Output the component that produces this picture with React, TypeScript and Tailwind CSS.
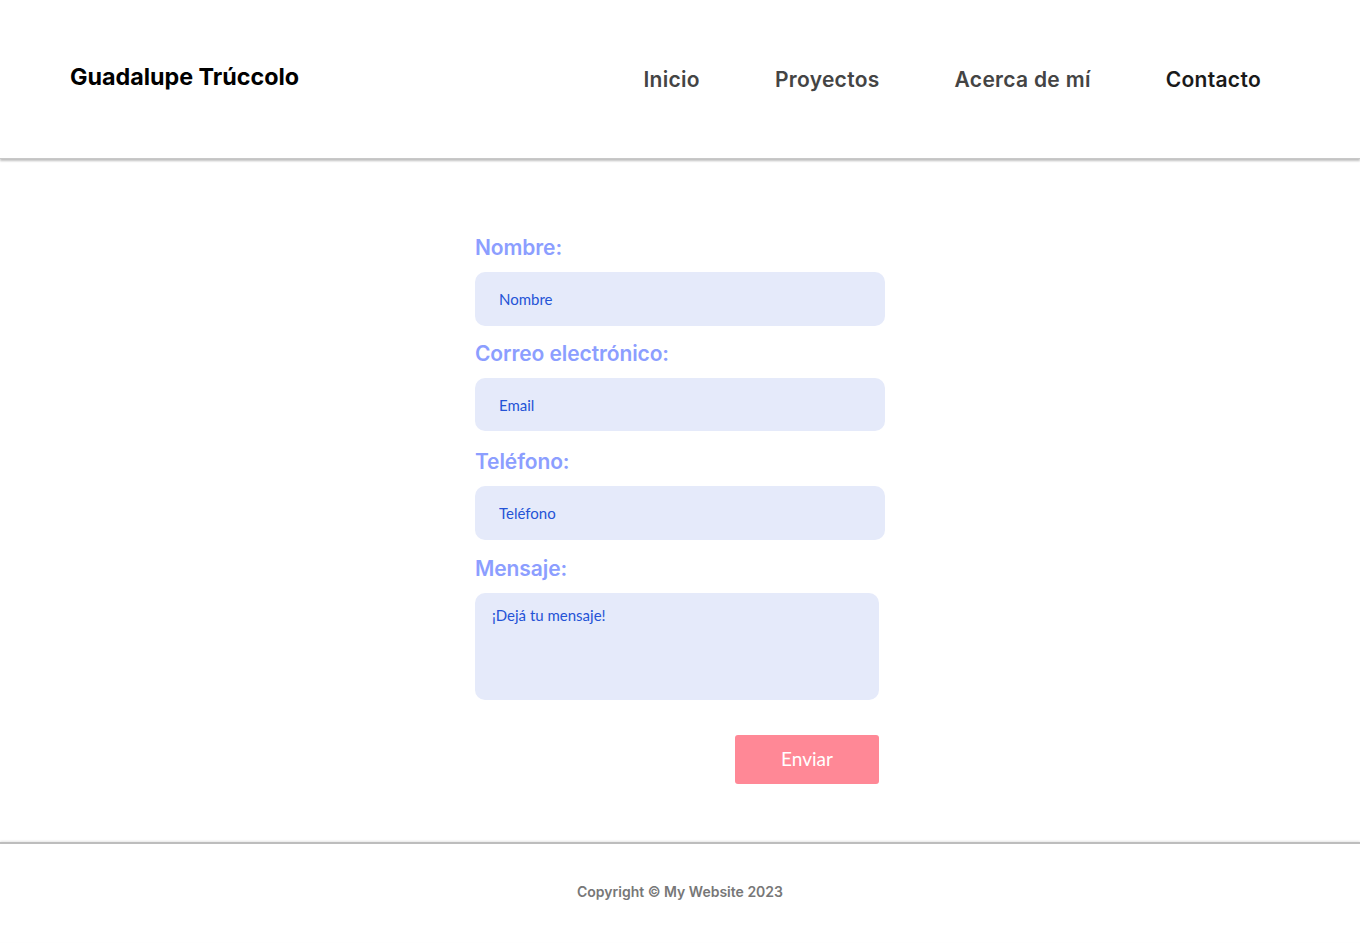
export default function App() {
  const font = { fontFamily: 'Inter, "Liberation Sans", sans-serif' }
  const label = 'block text-[21px] leading-[24px] font-semibold text-[#8c9eff] tracking-[-0.1px]'
  const field =
    'w-full rounded-[10px] bg-[#e5eafa] text-[15px] text-[#2453d6] placeholder:text-[#2453d6] outline-none font-["Lato",sans-serif]'

  return (
    <div className="min-h-screen bg-white" style={font}>
      {/* Cabecera */}
      <header className="h-[159px] flex items-start justify-between pl-[70px] pr-[99px] shadow-[0_2px_2px_rgba(0,0,0,0.25)] border-b border-[#c8c8c8]">
        <h1 className="mt-[63px] text-[23.3px] leading-[28px] font-bold text-black tracking-[0px]">
          Guadalupe Trúccolo
        </h1>
        <nav className="mt-[66px] flex gap-[75px] text-[21px] leading-[28px] font-semibold tracking-[0.3px]">
          <a className="text-[#444]">Inicio</a>
          <a className="text-[#444]">Proyectos</a>
          <a className="text-[#444]">Acerca de mí</a>
          <a className="text-[#1a1a1a]">Contacto</a>
        </nav>
      </header>

      {/* Formulario */}
      <main className="flex justify-center pt-[77px] pb-[58px]">
        <form className="w-[410px]" onSubmit={(e) => e.preventDefault()}>
          <label className={label}>Nombre:</label>
          <input className={`${field} mt-[12px] h-[54px] px-[24px]`} placeholder="Nombre" />

          <label className={`${label} mt-[16px]`}>Correo electrónico:</label>
          <input className={`${field} mt-[12px] h-[53px] px-[24px]`} placeholder="Email" />

          <label className={`${label} mt-[19px]`}>Teléfono:</label>
          <input className={`${field} mt-[12px] h-[54px] px-[24px]`} placeholder="Teléfono" />

          <label className={`${label} mt-[17px]`}>Mensaje:</label>
          <textarea
            className={`${field} mt-[12px] !w-[404px] h-[107px] px-[17px] py-[11px] resize-none block`}
            placeholder="¡Dejá tu mensaje!"
          />

          <div className="w-[404px] flex justify-end mt-[35px]">
            <button className="w-[144px] h-[49px] rounded-[3px] bg-[#ff8896] text-white text-[19px] font-['Lato',sans-serif]">
              Enviar
            </button>
          </div>
        </form>
      </main>

      {/* Pie */}
      <footer className="border-t-2 border-[#bdbdbd] shadow-[0_-1px_2px_rgba(0,0,0,0.1)] pt-[38px] pb-[40px] text-center">
        <p className="text-[14px] leading-[20px] font-semibold text-[#777]">Copyright © My Website 2023</p>
      </footer>
    </div>
  )
}
